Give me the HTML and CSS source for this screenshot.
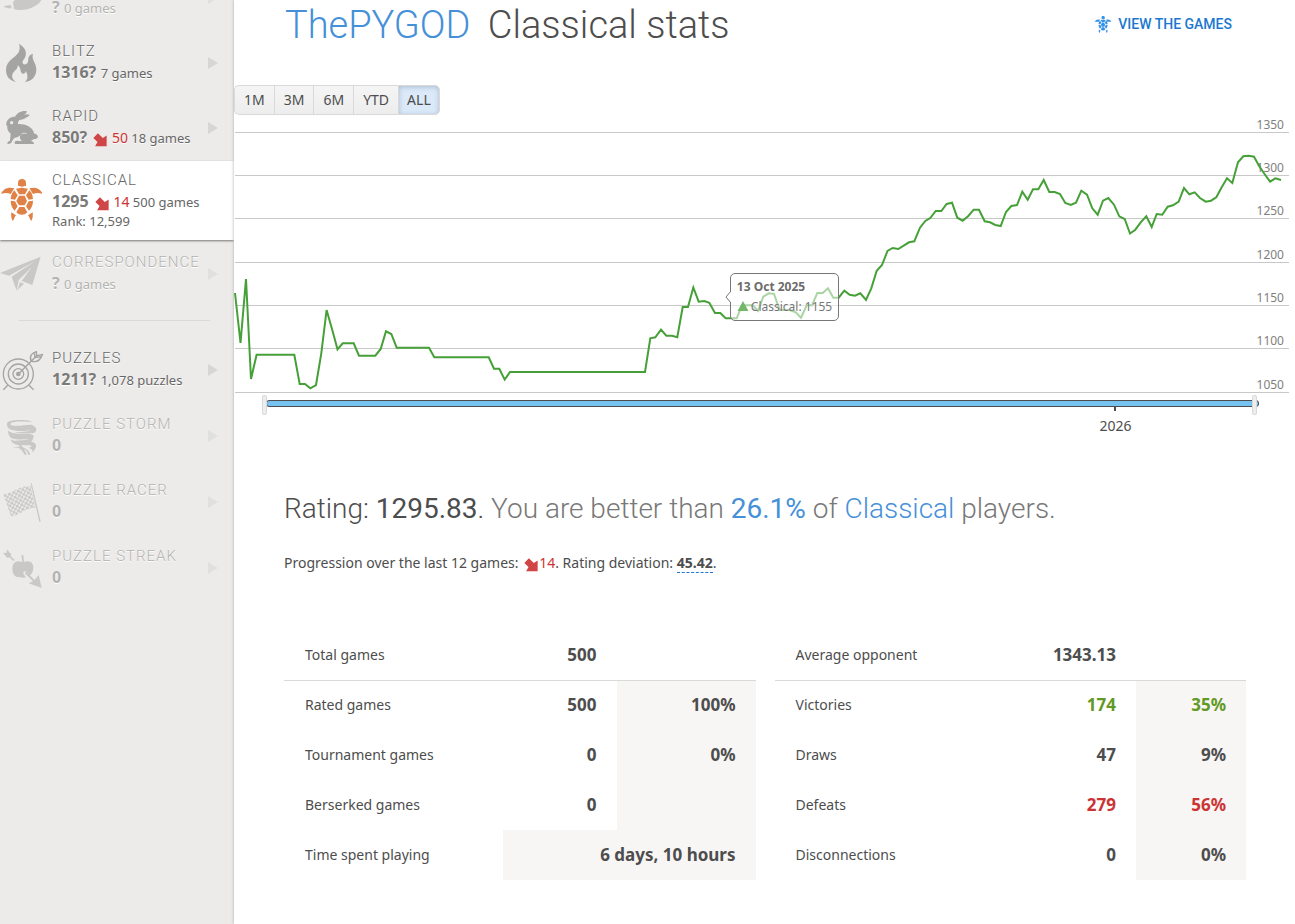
FILE: index.html
```html
<!DOCTYPE html>
<html lang="en">
<head>
<meta charset="utf-8">
<title>ThePYGOD Classical stats</title>
<link rel="stylesheet" href="styles.css">
</head>
<body>
<svg class="defs" aria-hidden="true">
  <symbol id="down" viewBox="0 0 40 40"><path d="M14 1 1 14 13 26 6 38H39V7L28 14Z"/></symbol>
  <symbol id="turtle" viewBox="0 0 126 126">
    <path d="M54 20V12C54 3 59 0 66 0S78 3 78 12V20L66 23ZM3 45C10 28 25 23 43 28L32 45C22 41 13 41 3 45ZM128 45C121 28 106 23 88 28L99 45C109 41 118 41 128 45Z"/>
    <path d="M48 29 66 26 84 29 75 46H57ZM43 34 53 49 45 62 32 60C33 48 37 40 43 34ZM88 34 78 49 86 62 99 60C98 48 95 40 88 34ZM57 50H74L81 66 74 79H57L49 66ZM32 65 45 67 53 82 44 95C36 87 32 77 32 65ZM99 65 86 67 78 82 87 95C95 87 99 77 99 65ZM58 84H73L82 100C73 110 58 110 49 100ZM34 100 48 109C42 115 44 121 38 126C33 118 33 109 34 100ZM98 100 84 109C90 115 88 121 94 126C99 118 99 109 98 100Z"/>
  </symbol>
</svg>
<div class="layout">
  <nav class="perfs" aria-label="Ratings">
    <a class="perf dim" href="#bullet">
      <svg class="icon" viewBox="0 0 126 126"><path d="M39 76 80 24 126 66C117 84 92 99 62 99C52 99 46 98 42 96ZM12 87 32 84 35 93C26 95 18 92 12 89Z"/></svg>
      <span class="info"><span class="name">Bullet</span><span class="line"><strong>?</strong> 0 games</span></span>
    </a>
    <a class="perf" href="#blitz">
      <svg class="icon" viewBox="0 0 126 126"><path d="M57 5C82 20 82 39 70 54C61 68 80 73 84 59C86 50 83 40 99 35C93 53 109 62 109 82C109 103 97 117 74 121C84 113 85 100 77 87C77 97 66 98 63 89C60 82 62 76 53 70C54 80 47 84 41 90C32 102 37 114 50 121C28 116 18 103 18 84C18 56 45 49 56 31C60 22 60 15 57 5Z"/></svg>
      <span class="info"><span class="name">Blitz</span><span class="line"><strong>1316?</strong> 7 games</span></span>
    </a>
    <a class="perf" href="#rapid">
      <svg class="icon" viewBox="0 0 126 126"><path fill-rule="evenodd" d="M45 29C51 17 64 10 80 12C81 18 76 22 70 24C77 21 84 22 90 24C82 32 70 38 58 39C55 43 53 48 54 51C75 50 98 59 103 80C110 80 115 86 113 92C109 96 105 96 102 96C99 99 95 100 92 102C98 103 102 106 102 111H45C41 104 47 100 56 102L66 102C60 97 58 91 61 84C54 92 46 91 42 94L36 103C36 107 32 111 24 111H22C22 105 25 102 30 101L32 80C24 74 20 65 22 58C18 55 18 49 20 45C24 34 34 29 45 29ZM35 42A5 5 0 1 0 35 52A5 5 0 1 0 35 42ZM63 83C67 76 76 76 82 82C76 78 69 79 63 83Z"/></svg>
      <span class="info"><span class="name">Rapid</span><span class="line"><strong>850?</strong> <svg class="down"><use href="#down"/></svg> <span class="loss">50</span> 18 games</span></span>
    </a>
    <a class="perf active" href="#classical" aria-current="page">
      <svg class="icon" viewBox="0 0 126 126"><use href="#turtle"/></svg>
      <span class="info"><span class="name">Classical</span><span class="line"><strong>1295</strong> <svg class="down"><use href="#down"/></svg> <span class="loss">14</span> 500 games</span><span class="rank">Rank: 12,599</span></span>
    </a>
    <a class="perf dim" href="#correspondence">
      <svg class="icon" viewBox="0 0 126 126"><path d="M122 11 0 60 27 68 106 24 35 71 50 113 56 81 95 43 65 84 97 96Z"/><path d="M60 88 72 92 52 112Z"/></svg>
      <span class="info"><span class="name">Correspondence</span><span class="line"><strong>?</strong> 0 games</span></span>
    </a>
    <hr>
    <a class="perf" href="#puzzles">
      <svg class="icon stroke" viewBox="0 0 126 126"><circle cx="55" cy="75" r="45"/><circle cx="55" cy="75" r="30"/><circle cx="55" cy="75" r="16"/><circle class="solid" cx="55" cy="75" r="5"/><path d="M55 75 110 20M93 36C87 19 97 12 109 8L110 20 127 17C122 31 112 42 93 36ZM103 12 105 26 122 23M24 108 10 122M86 108 101 122"/></svg>
      <span class="info"><span class="name">Puzzles</span><span class="line"><strong>1211?</strong> 1,078 puzzles</span></span>
    </a>
    <a class="perf dim" href="#storm">
      <svg class="icon" viewBox="0 0 126 126"><path d="M21 24C28 15 50 14 70 15C83 15 92 18 97 22C80 19 50 18 34 23C28 27 33 31 40 32C62 35 94 25 100 32C110 37 112 46 104 53C90 57 60 55 44 53C60 51 84 51 92 46C72 50 40 49 28 42C22 37 20 31 21 24ZM24 46C34 58 62 57 84 57C98 57 103 60 100 68L96 79C84 82 60 80 46 77C60 76 78 76 86 72C66 74 40 74 32 68C26 62 24 54 24 46ZM32 73C46 82 72 79 92 80C104 81 110 88 108 95C106 104 100 107 98 113C99 105 92 99 82 99C90 98 95 95 94 92C84 88 60 94 46 88C38 85 33 80 32 73ZM38 97C48 94 56 95 64 96C74 98 90 106 90 119L84 119C84 110 78 104 70 102C76 107 79 113 79 120L74 119C68 108 62 101 54 98C48 97 44 98 38 97ZM52 85 60 84 80 117 76 118Z"/></svg>
      <span class="info"><span class="name">Puzzle Storm</span><span class="line"><strong>0</strong></span></span>
    </a>
    <a class="perf dim" href="#racer">
      <svg class="icon" viewBox="0 0 126 126">
        <defs><pattern id="check" width="14" height="14" patternUnits="userSpaceOnUse" patternTransform="rotate(-18) skewX(-4)"><path d="M0 0H8V8H0ZM7 7H15V15H7Z"/></pattern></defs>
        <path fill="url(#check)" d="M10 40C40 37 57 12 93 15L108 80C76 78 65 103 33 106Z"/><path d="M92 7H95L122 121 118 123Z"/></svg>
      <span class="info"><span class="name">Puzzle Racer</span><span class="line"><strong>0</strong></span></span>
    </a>
    <a class="perf dim" href="#streak">
      <svg class="icon" viewBox="0 0 126 126"><path d="M9 17 19 18 22 7 29 18 34 20 32 28 44 39 40 42 29 31 21 32ZM64 25 70 24 72 45C89 38 101 47 100 64C99 74 95 82 90 86L80 75C74 69 67 75 71 82L78 91C68 95 63 89 56 90C43 90 36 78 37 62C38 47 51 38 67 46ZM78 74 104 99 116 84 125 123 86 109 99 103 74 79Z"/></svg>
      <span class="info"><span class="name">Puzzle Streak</span><span class="line"><strong>0</strong></span></span>
    </a>
  </nav>

  <main class="stats">
    <header class="head">
      <h1><a href="#user">ThePYGOD</a> Classical stats</h1>
      <a class="games" href="#games"><svg viewBox="0 0 130 126"><use href="#turtle" width="126" height="126"/></svg>View the games</a>
    </header>

    <section class="chart" aria-label="Rating history">
      <div class="ranges"><button>1M</button><button>3M</button><button>6M</button><button>YTD</button><button class="on">ALL</button></div>
      <div class="plot">
        <ol class="scale"><li>1350</li><li>1300</li><li>1250</li><li>1200</li><li>1150</li><li>1100</li><li>1050</li></ol>
        <svg class="curve" viewBox="0 0 1055 260" preserveAspectRatio="none"><polyline points="1,161 6.5,211 12,147 17,247 22.6,222.7 60.3,222.7 65.7,252 71,252 76.3,256.3 82,253 87.3,221.3 92.6,178 98.3,198 103.5,217.3 108.7,211.3 119.7,211.3 125,223.7 141.3,223.7 146.7,217 152,199.3 157.3,202 162.7,215.7 195,215.7 200.3,225.3 254.7,225.3 260,236.7 265.3,236.7 270.7,247.6 276,240 411,240 416.3,206.3 421.3,205.3 427,197.7 432.3,203.7 438,203.7 443.3,205.3 448.7,175 454,175 459.3,155.5 464.7,169.7 470.3,169 475.3,170.7 481,181 486.3,181 491.7,186.3 502.7,186.3 508,173.3 518.7,173.3 524,179 529.3,164.7 534.7,161.3 540,162 545.7,178 556,178 561.7,180.3 567,185.7 572.7,173.3 578,173.3 583.3,161 588.7,161 594,156.3 599.3,165.7 604.7,165.7 610.3,158.7 615.7,162.7 621,163.7 626.3,161.3 632,168 637.3,156.3 642.7,138.7 648,133 653.5,119 658.7,116 664.3,117 675,110.3 680.3,109.3 686,95.7 691.3,89 696.3,86 701.7,79 707.3,79 712.7,72 718,70.7 723.3,85.7 728.7,88.7 734.3,84 739.7,77.7 745,77.7 750.7,89.3 756,90.3 761.3,93 766.7,94 772,80 777.3,74 783,73 788.3,59.7 793.7,67.7 799,57.3 804.3,57.3 809.7,48 815.3,60 820.7,60 826,62 831.3,71 836.7,73 842,70.7 847.3,58.7 853,62.7 858.3,76.3 863.7,82.7 869,68.7 874.3,66 880,72.7 885.3,84.3 890.7,87 896,101.5 901.3,97.7 906.7,90.3 912.3,84.3 917.7,95 922.7,82 928.3,82.7 933.7,74.7 939,73.3 944.7,69.7 950,56 955.3,62.3 960.7,60.3 966,66 971.7,69.7 977,68.7 982.3,65.3 987.7,55.3 993,46.3 998.3,51 1004,30.3 1009.3,24.3 1014.7,23.7 1020,24.7 1025.3,34.3 1030.7,42.3 1036,49.7 1041.3,46.3 1047,48"/></svg>
        <div class="tip">
          <strong>13 Oct 2025</strong>
          <span><svg class="marker" viewBox="0 0 12 11"><path d="M6 0 12 11H0Z"/></svg>Classical: 1155</span>
          <svg class="beak" viewBox="0 0 6 12"><path d="M6 0 1 6 6 12"/></svg>
        </div>
      </div>
      <div class="slider">
        <div class="track"></div>
        <input type="range" aria-label="Start date" min="0" max="100" value="0">
        <input type="range" aria-label="End date" min="0" max="100" value="100">
        <span class="year">2026</span>
      </div>
    </section>

    <section class="summary">
      <h2>Rating: <strong>1295.83</strong>. <span class="percentile">You are better than <a href="#distribution"><strong>26.1%</strong></a> of <a href="#distribution">Classical</a> players.</span></h2>
      <p>Progression over the last 12 games: <svg class="down"><use href="#down"/></svg><span class="loss">14</span>. Rating deviation: <strong class="hint">45.42</strong>.</p>
    </section>

    <section class="counts">
      <table class="left">
        <colgroup><col class="a"><col class="b"><col class="c"></colgroup>
        <tr class="top"><th>Total games</th><td>500</td><td></td></tr>
        <tr><th>Rated games</th><td>500</td><td class="shade">100%</td></tr>
        <tr><th>Tournament games</th><td>0</td><td class="shade">0%</td></tr>
        <tr><th>Berserked games</th><td>0</td><td class="shade"></td></tr>
        <tr><th>Time spent playing</th><td class="shade" colspan="2">6 days, 10 hours</td></tr>
      </table>
      <table class="right">
        <colgroup><col class="a"><col class="b"><col class="c"></colgroup>
        <tr class="top"><th>Average opponent</th><td>1343.13</td><td></td></tr>
        <tr class="good"><th>Victories</th><td>174</td><td class="shade">35%</td></tr>
        <tr><th>Draws</th><td>47</td><td class="shade">9%</td></tr>
        <tr class="bad"><th>Defeats</th><td>279</td><td class="shade">56%</td></tr>
        <tr><th>Disconnections</th><td>0</td><td class="shade">0%</td></tr>
      </table>
    </section>
  </main>
</div>
</body>
</html>
```
FILE: styles.css
```css
* { box-sizing: border-box; }
html { overflow: hidden; }
body {
  margin: 0;
  background: #fff;
  color: #4d4d4d;
  font: 14px/22px "Noto Sans", sans-serif;
}
a { color: #4590d8; text-decoration: none; }
.defs { position: absolute; width: 0; height: 0; }
.layout {
  display: grid;
  grid-template-columns: 234px 1fr;
  min-height: 100vh;
  padding-right: 6px;
}

/* sidebar */
.perfs {
  margin-top: -34px;
  background: #ecebe9;
}
.perf {
  display: flex;
  align-items: center;
  gap: 10px;
  height: 65px;
  padding: 0 16px 2px 0;
  color: #666;
  text-shadow: 0 1px 0 #fff;
}
.perf::after {
  content: "";
  flex: none;
  margin-left: -10px;
  border: solid transparent;
  border-width: 6px 0 6px 10px;
  border-left-color: #d6d6d4;
}
.perf.dim { color: #b3b3b1; }
.perf.dim::after { border-left-color: #e0e0de; }
.icon { flex: none; width: 42px; height: 42px; fill: #a4a4a2; overflow: visible; }
.dim .icon { fill: #c9c8c6; }
.stroke { fill: none; stroke: #a4a4a2; stroke-width: 4; }
.solid { fill: #a4a4a2; }
.info { display: flex; flex-direction: column; flex: none; width: 156px; white-space: nowrap; }
.name {
  font: 300 15px/20px Roboto, sans-serif;
  letter-spacing: 1px;
  text-transform: uppercase;
}
.line { font-size: 13px; line-height: 22px; }
.line strong { margin-right: 1px; font-size: 16px; color: #7a7a78; }
.dim .line strong { color: #b3b3b1; }
.rank { font-size: 13px; line-height: 16px; }
.down { width: 14px; height: 14px; fill: #d04545; vertical-align: -4px; }
.line .down { margin: 0 1px 0 2px; }
.loss { color: #c33; }
.line .loss { font-size: 14px; }
.active {
  height: 79px;
  margin-bottom: 2px;
  background: #fff;
  box-shadow: 0 1px 2px #777;
}
.active::after { visibility: hidden; }
.active .icon { fill: #e08247; }
hr {
  margin: 13px 24px 17px 19px;
  border: 0;
  border-top: 1px solid #d9d9d9;
}
hr ~ .perf { margin-bottom: 1px; }

/* heading */
.stats {
  position: relative;
  background: #fff;
  box-shadow: 0 0 3px #aaa;
  clip-path: inset(0 0 0 -4px);
}
.head {
  display: flex;
  justify-content: space-between;
  align-items: center;
  height: 50px;
  padding: 0 57px 0 51px;
}
h1 { margin: 0; font: 300 38px/50px Roboto, sans-serif; }
h1 a { margin-right: 8px; }
.games {
  display: flex;
  align-items: center;
  gap: 6px;
  height: 48px;
  margin-bottom: 2px;
  color: #1b78d0;
  font: 500 14px/20px Roboto, sans-serif;
  text-transform: uppercase;
}
.games svg { width: 18px; height: 17px; fill: #3692e7; }

/* chart */
.chart { padding-top: 35px; }
.ranges { display: flex; }
.ranges button {
  height: 30px;
  padding: 0 9px;
  border: 1px solid #d9d9d9;
  border-right-width: 0;
  background: linear-gradient(#f5f5f5, #ededed);
  color: #4d4d4d;
  font: 14px/20px "Noto Sans", sans-serif;
}
.ranges button:first-child { border-radius: 5px 0 0 5px; }
.ranges button:last-child { padding: 0 8px; border-right-width: 1px; border-radius: 0 5px 5px 0; }
.ranges .on { background: #dbe9f8; box-shadow: inset 0 1px 5px #a8bdd2; }
.plot { position: relative; height: 278px; padding-left: 1px; }
.scale { margin: 0; padding: 0; list-style: none; }
.scale li {
  display: flex;
  justify-content: flex-end;
  align-items: flex-end;
  height: 43px;
  padding-right: 5px;
  border-bottom: 1px solid #c8c8c8;
  color: #808080;
  font-size: 12px;
  line-height: 14px;
}
.scale li:first-child { height: 18px; }
.scale li:nth-child(4), .scale li:nth-child(7) { height: 44px; }
.curve {
  position: absolute;
  left: 0;
  top: 17px;
  width: 100%;
  height: 260px;
  overflow: visible;
}
.curve polyline {
  fill: none;
  stroke: #46a038;
  stroke-width: 2;
  vector-effect: non-scaling-stroke;
}
.tip {
  position: absolute;
  left: 47%;
  top: 158px;
  display: flex;
  flex-direction: column;
  padding: 3px 6px;
  border: 1px solid #777;
  border-radius: 5px;
  background: rgba(255, 255, 255, .55);
  color: #777;
  font-size: 12px;
  line-height: 20px;
}
.tip strong { color: #6c6c6c; }
.marker { width: 12px; height: 10px; margin-right: 2px; fill: #74b76b; }
.beak { position: absolute; left: -6px; top: 17px; width: 6px; height: 12px; fill: #fff; stroke: #777; }

/* date slider */
.slider { display: flow-root; position: relative; height: 60px; margin: 0 30px 0 28px; }
.track {
  height: 7px;
  margin: 7px 0 0 4px;
  border: 1px solid #4d4d4d;
  border-radius: 3px;
  background: #76c3f2;
}
.slider input {
  position: absolute;
  left: 0;
  top: 2px;
  width: calc(100% - 2px);
  height: 20px;
  margin: 0;
  appearance: none;
  background: none;
  pointer-events: none;
}
.slider input::-webkit-slider-thumb {
  appearance: none;
  width: 5px;
  height: 20px;
  border: 1px solid #d9d9d9;
  border-radius: 2px;
  background: #ededed;
  pointer-events: auto;
}
.year {
  position: absolute;
  left: 85.6%;
  top: 14px;
  width: 40px;
  margin-left: -20px;
  padding-top: 8px;
  text-align: center;
}
.year::before {
  content: "";
  position: absolute;
  left: 19px;
  top: 0;
  width: 2px;
  height: 4px;
  background: #4d4d4d;
}

/* summary */
.summary { padding: 38px 43px 0 50px; }
h2 { margin: 0; font: 300 28px/36px Roboto, sans-serif; }
h2 strong { font-weight: 400; }
.percentile { color: #787878; }
.summary p { margin: 25px 0 0; }
.summary .down { margin: 0 1px 0 2px; }
.hint { border-bottom: 1px dashed #1b78d0; }

/* tables */
.counts {
  display: grid;
  grid-template-columns: 1fr 1fr;
  gap: 19px;
  padding: 56px 43px 43px 50px;
}
table { width: 100%; table-layout: fixed; border-collapse: collapse; }
.left .b { width: 114px; }
.left .c { width: 139px; }
.right .b { width: 144px; }
.right .c { width: 110px; }
tr { height: 50px; }
.top { border-bottom: 1px solid #d9d9d9; }
th { padding: 0 0 0 21px; font-weight: 400; text-align: left; }
td { padding: 0 20px; font-size: 17px; font-weight: 700; text-align: right; }
.shade { background: #f7f6f5; }
.good td { color: #629924; }
.bad td { color: #c33; }
```
